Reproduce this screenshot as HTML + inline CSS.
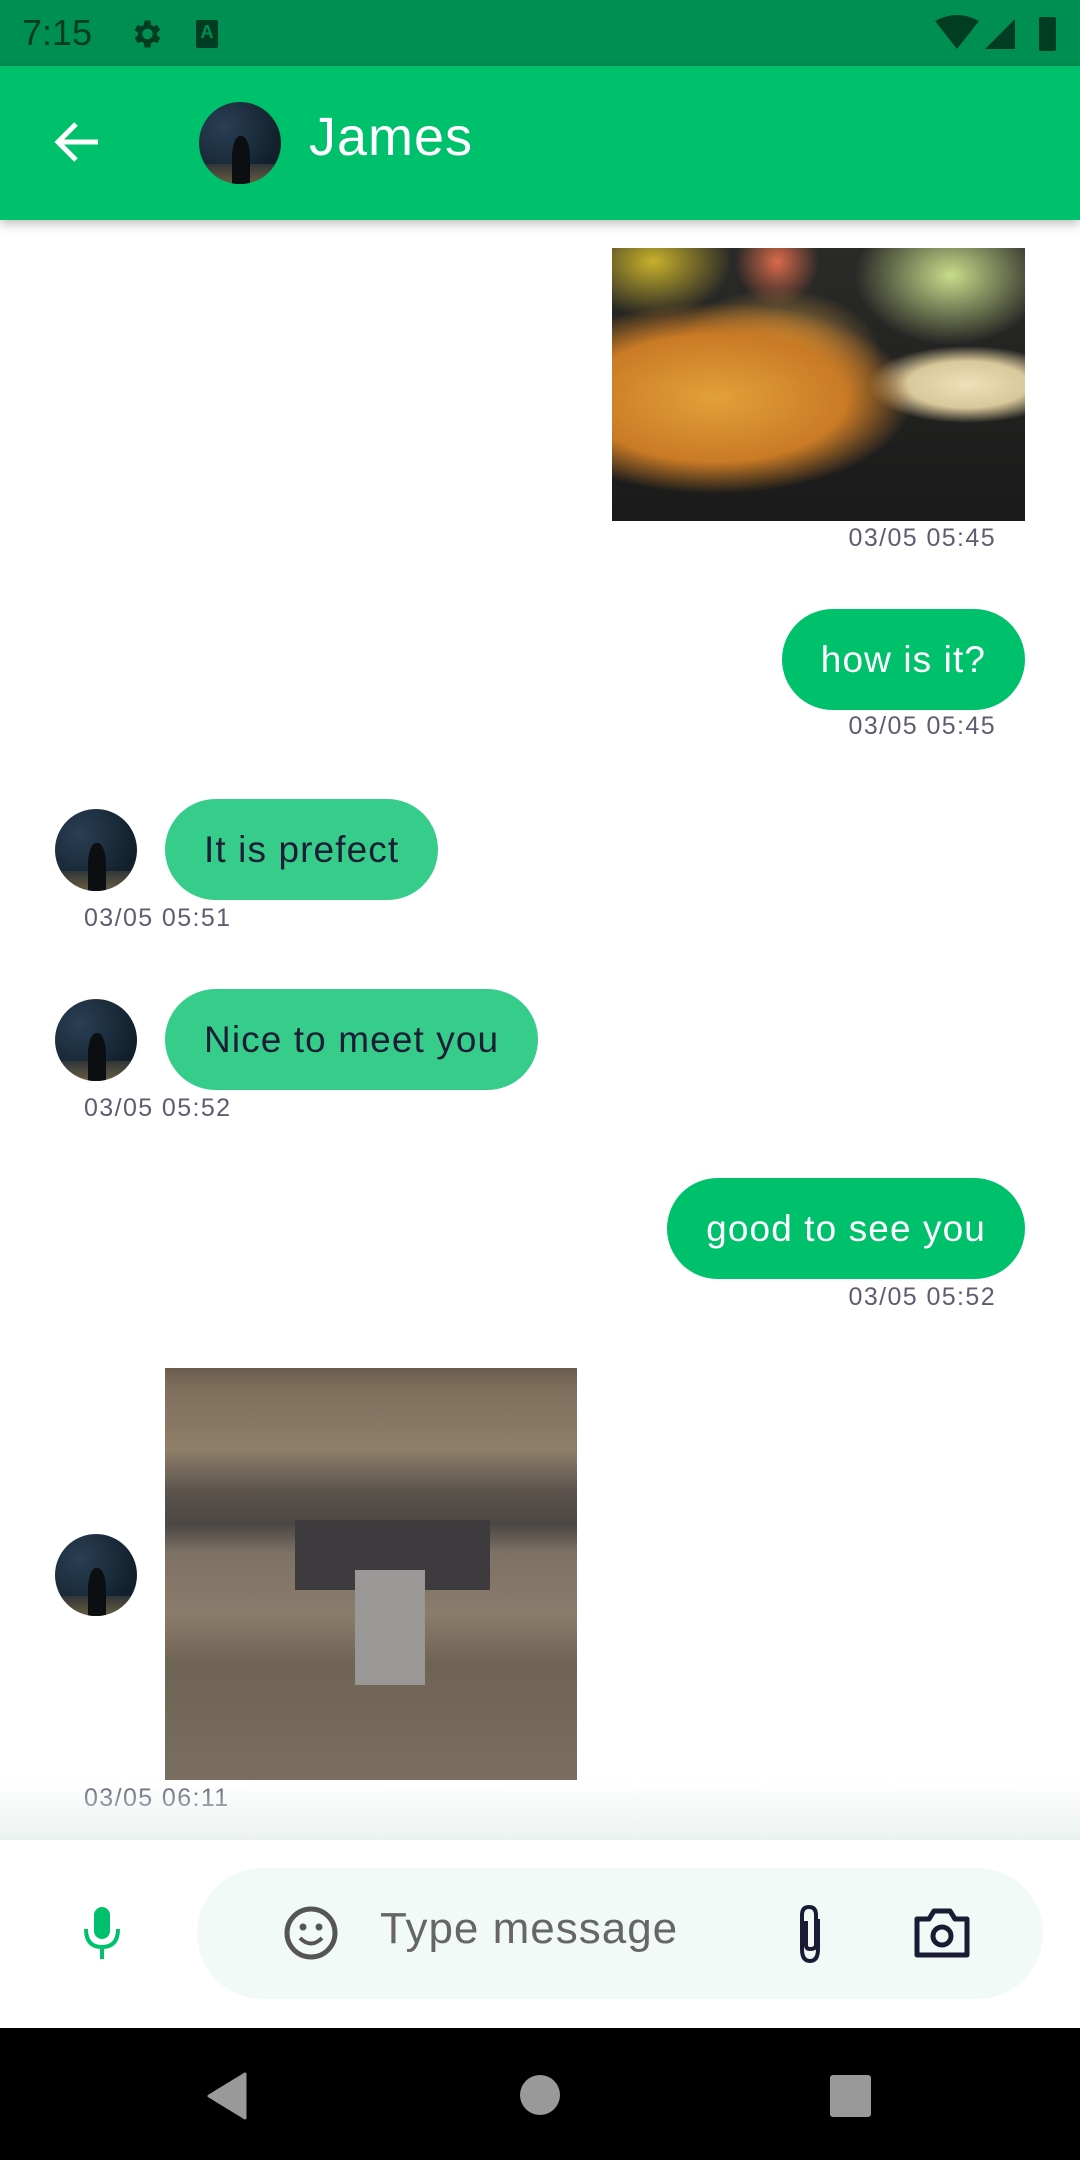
<!DOCTYPE html>
<html><head><meta charset="utf-8"><style>
*{margin:0;padding:0;box-sizing:border-box}
body{width:1080px;height:2160px;position:relative;overflow:hidden;background:#fff;font-family:"Liberation Sans",sans-serif}
.a{position:absolute}
.av{position:absolute;width:82px;height:82px;border-radius:50%;overflow:hidden;background:radial-gradient(circle at 30% 30%,#2a3f55,#12202c 70%);}
.av:after{content:"";position:absolute;left:0;right:0;bottom:0;height:25%;background:linear-gradient(#30373a,#6a5c40)}
.av i{position:absolute;left:40%;top:42%;width:22%;height:58%;background:#0b0f12;border-radius:45% 45% 0 0;z-index:2}
.ts{position:absolute;font-size:25px;color:#5f5c70;letter-spacing:1.4px}
.tr{right:84px}
.bub{position:absolute;height:101px;border-radius:51px;font-size:37px;line-height:101px;padding:0 39px;letter-spacing:1.1px}
.r{background:#00c16b;color:#fff;right:55px}
.l{background:#36cd8b;color:#1d1d35}
</style></head><body>
<div class="a" style="left:0;top:0;width:1080px;height:66px;background:#008f52"></div>
<div class="a" style="left:22px;top:12px;font-size:36px;color:#013d22">7:15</div>
<svg class="a" style="left:128px;top:16px" width="36" height="36" viewBox="0 0 24 24"><path fill="#013d22" d="M19.4 13a7.5 7.5 0 000-2l2.1-1.6-2-3.5-2.5 1a7 7 0 00-1.7-1L15 3h-4l-.4 2.9a7 7 0 00-1.7 1l-2.5-1-2 3.5L6.6 11a7.5 7.5 0 000 2l-2.1 1.6 2 3.5 2.5-1a7 7 0 001.7 1L11 21h4l.4-2.9a7 7 0 001.7-1l2.5 1 2-3.5zM13 15.5A3.5 3.5 0 1113 8.5a3.5 3.5 0 010 7z"/></svg>
<div class="a" style="left:196px;top:20px;width:22px;height:28px;background:#013d22;border-radius:2px;color:#008f52;font-size:18px;font-weight:bold;text-align:center;line-height:24px">A</div>
<svg class="a" style="left:935px;top:15px" width="125" height="38"><path d="M0 6 Q22 -6 44 6 L22 34Z" fill="#013d22"/><path d="M50 34 L80 4 L80 34Z" fill="#013d22"/><rect x="104" y="2" width="17" height="34" rx="2" fill="#013d22"/></svg>
<div class="a" style="left:0;top:66px;width:1080px;height:154px;background:#00c16b;box-shadow:0 4px 10px rgba(0,0,0,.25)"></div>
<svg class="a" style="left:52px;top:120px" width="50" height="44"><path d="M46 22 H6 M24 4 L6 22 L24 40" stroke="#fff" stroke-width="5" fill="none"/></svg>
<div class="av" style="left:199px;top:102px"><i></i></div>
<div class="a" style="left:309px;top:106px;font-size:54px;color:#fff;letter-spacing:1px">James</div>

<div class="a" style="left:612px;top:248px;width:413px;height:273px;background:
radial-gradient(ellipse at 25% 55%,#e3a03a 0,#c97a25 30%,transparent 45%),
radial-gradient(ellipse at 40% 40%,#e8a845 0,transparent 30%),
radial-gradient(ellipse at 86% 50%,#efe0b8 0,#d9c89a 12%,transparent 20%),
radial-gradient(ellipse at 82% 10%,#c9dc8a 0,transparent 20%),
radial-gradient(ellipse at 10% 5%,#c8b02a 0,transparent 15%),
radial-gradient(ellipse at 40% 5%,#d96a4a 0,transparent 12%),
linear-gradient(#2a2a28,#1a1a1a)"></div>
<div class="ts tr" style="top:524px">03/05 05:45</div>

<div class="bub r" style="top:609px">how is it?</div>
<div class="ts tr" style="top:712px">03/05 05:45</div>

<div class="av" style="left:55px;top:809px"><i></i></div>
<div class="bub l" style="left:165px;top:799px">It is prefect</div>
<div class="ts" style="left:84px;top:904px">03/05 05:51</div>

<div class="av" style="left:55px;top:999px"><i></i></div>
<div class="bub l" style="left:165px;top:989px">Nice to meet you</div>
<div class="ts" style="left:84px;top:1094px">03/05 05:52</div>

<div class="bub r" style="top:1178px">good to see you</div>
<div class="ts tr" style="top:1283px">03/05 05:52</div>

<div class="av" style="left:55px;top:1534px"><i></i></div>
<div class="a" style="left:165px;top:1368px;width:412px;height:412px;background:
linear-gradient(#6b5d4e 0,#7f6f5c 5%,#8e7e6a 20%,#5b534c 30%,#4b4744 38%,#7e7265 45%,#8a7c6b 60%,#6f6354 72%,#7a6e60 100%)"></div>
<div class="a" style="left:295px;top:1520px;width:195px;height:70px;background:#3d3b3d"></div>
<div class="a" style="left:355px;top:1570px;width:70px;height:115px;background:#9a9896"></div>
<div class="ts" style="left:84px;top:1784px">03/05 06:11</div>

<div class="a" style="left:0;top:1780px;width:1080px;height:60px;background:linear-gradient(rgba(235,242,239,0),#ebf2ef)"></div>
<div class="a" style="left:0;top:1840px;width:1080px;height:188px;background:#fff"></div>
<div class="a" style="left:197px;top:1868px;width:846px;height:131px;border-radius:66px;background:#f1faf6"></div>
<svg class="a" style="left:82px;top:1905px" width="40" height="56"><rect x="12" y="2" width="16" height="32" rx="8" fill="#00c16b"/><path d="M4 24 Q4 42 20 42 Q36 42 36 24 M20 42 V54" stroke="#00c16b" stroke-width="4" fill="none"/></svg>
<svg class="a" style="left:283px;top:1905px" width="56" height="56"><circle cx="28" cy="28" r="24" stroke="#555" stroke-width="5" fill="none"/><circle cx="20" cy="22" r="3.5" fill="#555"/><circle cx="36" cy="22" r="3.5" fill="#555"/><path d="M17 33 Q28 44 39 33" stroke="#555" stroke-width="4" fill="none"/></svg>
<div class="a" style="left:380px;top:1904px;font-size:44px;color:#666;letter-spacing:1px">Type message</div>
<svg class="a" style="left:792px;top:1903px" width="36" height="62"><path d="M26 16 V46 Q26 58 18 58 Q10 58 10 46 V12 Q10 4 17 4 Q24 4 24 12 V42 Q24 46 18 46 Q14 46 14 42 V18" stroke="#1b1b33" stroke-width="4" fill="none"/></svg>
<svg class="a" style="left:913px;top:1907px" width="58" height="52"><path d="M4 12 H16 L21 4 H37 L42 12 H54 V48 H4Z" stroke="#1b1b33" stroke-width="5" fill="none" stroke-linejoin="round"/><circle cx="29" cy="29" r="9" stroke="#1b1b33" stroke-width="5" fill="none"/></svg>

<div class="a" style="left:0;top:2028px;width:1080px;height:132px;background:#000"></div>
<svg class="a" style="left:205px;top:2072px" width="42" height="48"><path d="M40 2 V46 L4 24Z" fill="#999" stroke="#999" stroke-width="3" stroke-linejoin="round"/></svg>
<div class="a" style="left:520px;top:2075px;width:40px;height:40px;border-radius:50%;background:#999"></div>
<div class="a" style="left:830px;top:2075px;width:41px;height:42px;border-radius:3px;background:#999"></div>
</body></html>
